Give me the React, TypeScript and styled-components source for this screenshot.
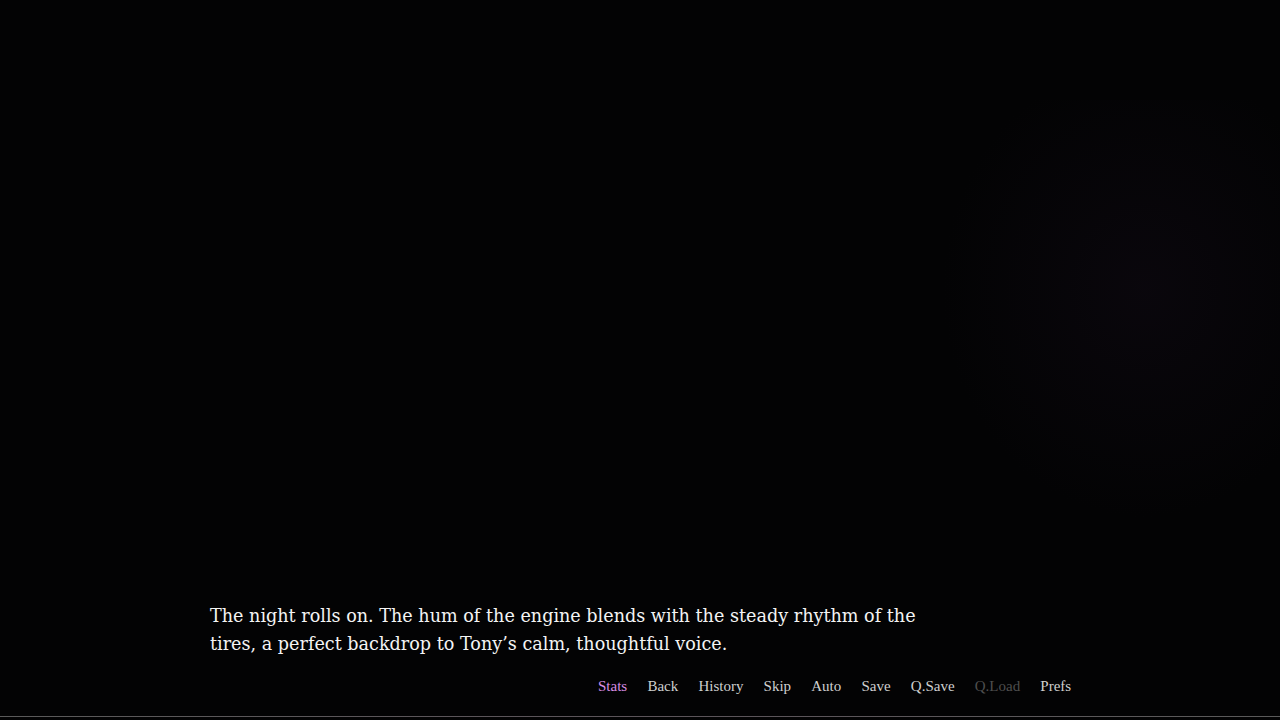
import React from "react";
import styled, { createGlobalStyle } from "styled-components";

const Global = createGlobalStyle`
  html, body { margin: 0; padding: 0; background: #030303; }
  body { width: 1280px; height: 720px; overflow: hidden; }
`;

const Screen = styled.div`
  width: 1280px;
  height: 720px;
  background: #030304;
  display: flex;
  flex-direction: column;
  justify-content: flex-end;
  position: relative;
  overflow: hidden;
`;

const Shade = styled.div`
  position: absolute;
  right: 0;
  top: 100px;
  width: 340px;
  height: 420px;
  background: radial-gradient(ellipse at 60% 45%, rgba(16, 10, 20, 0.5), rgba(0, 0, 0, 0) 70%);
  pointer-events: none;
`;

const Dialogue = styled.p`
  margin: 0 0 18px 0;
  padding-left: 210px;
  width: 730px;
  font-family: "DejaVu Serif", "Liberation Serif", serif;
  font-size: 17.6px;
  line-height: 28px;
  color: #f4f4f4;
  position: relative;
`;

const Menu = styled.nav`
  display: flex;
  gap: 20.2px;
  padding-left: 598px;
  height: 20px;
  align-items: center;
  margin-bottom: 20px;
  position: relative;
`;

const MenuItem = styled.span<{ $tone?: "active" | "disabled" }>`
  font-family: "Liberation Serif", "DejaVu Serif", serif;
  font-size: 15px;
  color: ${(p) =>
    p.$tone === "active" ? "#d98ee3" : p.$tone === "disabled" ? "#4e4e4e" : "#cfcfcf"};
`;

const BaseLine = styled.div`
  height: 1px;
  background: linear-gradient(90deg, #5a5a5a, #5c545a 50%, #5a5a5a);
  margin-bottom: 3px;
`;

const items: { label: string; tone?: "active" | "disabled" }[] = [
  { label: "Stats", tone: "active" },
  { label: "Back" },
  { label: "History" },
  { label: "Skip" },
  { label: "Auto" },
  { label: "Save" },
  { label: "Q.Save" },
  { label: "Q.Load", tone: "disabled" },
  { label: "Prefs" },
];

export default function App() {
  return (
    <>
      <Global />
      <Screen>
        <Shade />
        <Dialogue>
          The night rolls on. The hum of the engine blends with the steady rhythm of the
          tires, a perfect backdrop to Tony’s calm, thoughtful voice.
        </Dialogue>
        <Menu>
          {items.map((it) => (
            <MenuItem key={it.label} $tone={it.tone}>
              {it.label}
            </MenuItem>
          ))}
        </Menu>
        <BaseLine />
      </Screen>
    </>
  );
}
